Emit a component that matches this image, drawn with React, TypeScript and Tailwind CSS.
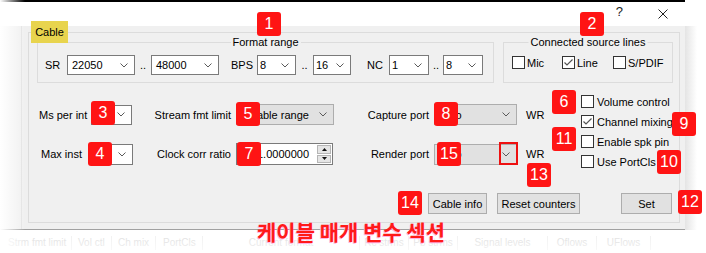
import React from 'react';

function Chevron() {
  return (
    <svg width="8" height="5" viewBox="0 0 8 5" className="shrink-0">
      <path d="M0.5 0.5 L4 4 L7.5 0.5" fill="none" stroke="#5a5a5a" strokeWidth="1" />
    </svg>
  );
}

function Combo({ value, className, textClass = 'pl-[4px]' }: { value: string; className: string; textClass?: string }) {
  return (
    <div className={`flex items-center border ${className}`}>
      <span className={`flex-1 truncate ${textClass}`}>{value}</span>
      <span className="mr-[6px]">
        <Chevron />
      </span>
    </div>
  );
}

function Check({ checked = false }: { checked?: boolean }) {
  return (
    <span className="w-[13px] h-[13px] shrink-0 border border-[#333333] bg-white flex items-center justify-center">
      {checked && (
        <svg width="11" height="11" viewBox="0 0 11 11">
          <path d="M1.5 5.5 L4 8 L9.5 2.5" fill="none" stroke="#555555" strokeWidth="1.2" />
        </svg>
      )}
    </span>
  );
}

function Badge({ n, className }: { n: string; className: string }) {
  return (
    <div
      className={`absolute w-[24px] h-[24px] rounded-[3px] bg-[#ff1414] text-white text-[16px] leading-none flex items-center justify-center font-['Liberation_Sans',Arial,sans-serif] ${className}`}
    >
      {n}
    </div>
  );
}

function Btn({ label, className }: { label: string; className: string }) {
  return (
    <div className={`h-[21px] bg-[#e1e1e1] border border-[#adadad] flex items-center justify-center ${className}`}>
      {label}
    </div>
  );
}

export default function App() {
  return (
    <div className="relative w-[706px] h-[253px] overflow-hidden bg-white text-[11px] leading-[14px] text-black font-['Liberation_Sans',Arial,sans-serif]">
      <div className="w-[685px] flex flex-col">
        <div className="h-[2px] bg-black" />
        {/* title bar */}
        <div className="h-[24px] bg-white flex items-center justify-end pr-[17px]">
          <span className="text-[13px] text-[#222222] mr-[35px] -mt-[4px]">?</span>
          <svg width="10" height="10" viewBox="0 0 10 10">
            <path d="M0.5 0.5 L9.5 9.5 M9.5 0.5 L0.5 9.5" stroke="#222222" strokeWidth="1" />
          </svg>
        </div>

        {/* body */}
        <div className="relative h-[203px] bg-[#f0f0f0] pl-[28px] pt-[6px]">
          <div className="absolute left-[21px] top-0 bottom-0 w-px bg-[#e2e2e2]" />
          <div className="w-[652px] h-[191px] border border-[#dcdcdc] flex flex-col">
            {/* format range + source lines */}
            <div className="flex mt-[9px] ml-[8px] gap-[9px]">
              <div className="relative w-[457px] h-[41px] border border-[#dcdcdc] pt-[12px] pl-[7px]">
                <span className="absolute -top-[8px] left-1/2 -translate-x-1/2 bg-[#f0f0f0] px-[2px] whitespace-nowrap">
                  Format range
                </span>
                <div className="flex items-center h-[20px]">
                  <span className="w-[22px]">SR</span>
                  <Combo value="22050" className="w-[68px] h-[20px] bg-white border-[#7a7a7a]" />
                  <span className="w-[16px] text-center">..</span>
                  <Combo value="48000" className="w-[68px] h-[20px] bg-white border-[#7a7a7a]" />
                  <span className="w-[38px] pl-[12px]">BPS</span>
                  <Combo value="8" textClass="pl-[2px]" className="w-[39px] h-[20px] bg-white border-[#7a7a7a]" />
                  <span className="w-[17px] text-center">..</span>
                  <Combo value="16" textClass="pl-[2px]" className="w-[38px] h-[20px] bg-white border-[#7a7a7a]" />
                  <span className="w-[38px] pl-[16px]">NC</span>
                  <Combo value="1" textClass="pl-[2px]" className="w-[40px] h-[20px] bg-white border-[#7a7a7a]" />
                  <span className="w-[14px] text-center">..</span>
                  <Combo value="8" textClass="pl-[2px]" className="w-[40px] h-[20px] bg-white border-[#7a7a7a]" />
                </div>
              </div>
              <div className="relative w-[170px] h-[41px] border border-[#dcdcdc] pt-[13px] pl-[8px]">
                <span className="absolute -top-[8px] left-1/2 -translate-x-1/2 bg-[#f0f0f0] px-[2px] whitespace-nowrap">
                  Connected source lines
                </span>
                <div className="flex items-center h-[13px]">
                  <div className="w-[50px] flex items-center gap-[2px]">
                    <Check />
                    <span>Mic</span>
                  </div>
                  <div className="w-[51px] flex items-center gap-[2px]">
                    <Check checked />
                    <span>Line</span>
                  </div>
                  <div className="flex items-center gap-[2px]">
                    <Check />
                    <span>S/PDIF</span>
                  </div>
                </div>
              </div>
            </div>

            {/* controls */}
            <div className="flex mt-[12px]">
              <div className="w-[552px] flex flex-col pt-[9px]">
                <div className="flex items-center h-[21px]">
                  <span className="w-[62px] pl-[10px]">Ms per int</span>
                  <Combo value="" className="w-[41px] h-[20px] bg-white border-[#7a7a7a]" />
                  <span className="w-[104px] text-right pr-[5px]">Stream fmt limit</span>
                  <Combo value="Disable range" className="w-[98px] h-[21px] bg-[#e1e1e1] border-[#adadad]" />
                  <span className="w-[100px] text-right pr-[5px]">Capture port</span>
                  <Combo value="Auto" className="w-[83px] h-[21px] bg-[#e1e1e1] border-[#adadad]" />
                  <span className="ml-[9px]">WR</span>
                </div>
                <div className="flex items-center h-[22px] mt-[18px]">
                  <span className="w-[62px] pl-[12px]">Max inst</span>
                  <Combo value="" className="w-[42px] h-[21px] bg-white border-[#7a7a7a]" />
                  <span className="w-[103px] text-right pr-[5px]">Clock corr ratio</span>
                  <div className="w-[97px] h-[22px] border border-[#7a7a7a] bg-white flex items-center">
                    <span className="flex-1 text-right pr-[7px]">1.0000000</span>
                    <div className="w-[16px] h-full flex flex-col p-px gap-px">
                      <div className="flex-1 bg-[#e5e5e5] border border-[#b5b5b5] flex items-center justify-center">
                        <svg width="5" height="3" viewBox="0 0 5 3"><path d="M2.5 0 L5 3 L0 3 Z" fill="#111" /></svg>
                      </div>
                      <div className="flex-1 bg-[#e5e5e5] border border-[#b5b5b5] flex items-center justify-center">
                        <svg width="5" height="3" viewBox="0 0 5 3"><path d="M0 0 L5 0 L2.5 3 Z" fill="#111" /></svg>
                      </div>
                    </div>
                  </div>
                  <span className="w-[101px] text-right pr-[5px]">Render port</span>
                  <Combo value="Auto" className="w-[83px] h-[21px] bg-[#e1e1e1] border-[#adadad]" />
                  <span className="ml-[9px]">WR</span>
                </div>
              </div>
              <div className="flex flex-col gap-[7px]">
                <div className="flex items-center gap-[3px] h-[13px]">
                  <Check />
                  <span>Volume control</span>
                </div>
                <div className="flex items-center gap-[3px] h-[13px]">
                  <Check checked />
                  <span>Channel mixing</span>
                </div>
                <div className="flex items-center gap-[3px] h-[13px]">
                  <Check />
                  <span>Enable spk pin</span>
                </div>
                <div className="flex items-center gap-[3px] h-[13px]">
                  <Check />
                  <span>Use PortCls</span>
                </div>
              </div>
            </div>

            {/* buttons */}
            <div className="flex justify-end pr-[7px] mt-[25px]">
              <Btn label="Cable info" className="w-[59px]" />
              <Btn label="Reset counters" className="w-[83px] ml-[10px]" />
              <Btn label="Set" className="w-[51px] ml-[41px]" />
            </div>
          </div>
        </div>

        <div className="h-px bg-[#a0a0a0]" />
        {/* faded list header behind */}
        <div className="h-[23px] flex items-end pb-[3px] text-[10px] text-[#dadada]">
          <span className="w-[72px] pl-[8px] border-r border-[#eeeeee] whitespace-nowrap overflow-hidden">Strm fmt limit</span>
          <span className="w-[40px] pl-[6px] border-r border-[#eeeeee] whitespace-nowrap overflow-hidden">Vol ctl</span>
          <span className="w-[44px] pl-[6px] border-r border-[#eeeeee] whitespace-nowrap overflow-hidden">Ch mix</span>
          <span className="w-[47px] pl-[7px] border-r border-[#eeeeee] whitespace-nowrap overflow-hidden">PortCls</span>
          <span className="w-[157px] text-center border-r border-[#eeeeee] whitespace-nowrap">Current format</span>
          <span className="w-[49px] text-center border-r border-[#eeeeee] whitespace-nowrap overflow-hidden">Rc strms</span>
          <span className="w-[49px] text-center border-r border-[#eeeeee] whitespace-nowrap overflow-hidden">Pb strms</span>
          <span className="w-[90px] text-center border-r border-[#eeeeee] whitespace-nowrap">Signal levels</span>
          <span className="w-[49px] text-center border-r border-[#eeeeee] whitespace-nowrap">Oflows</span>
          <span className="w-[54px] text-center border-r border-[#eeeeee] whitespace-nowrap">UFlows</span>
        </div>
      </div>

      {/* fades */}
      <div className="absolute left-0 top-0 w-[25px] h-full bg-linear-to-r from-white to-transparent" />
      <div className="absolute left-0 top-[229px] w-[706px] h-[24px] bg-linear-to-b from-transparent to-white/70" />
      <div className="absolute left-[685px] top-[26px] w-[12px] h-[204px] bg-linear-to-r from-[#e4e4e4] to-transparent" />

      {/* highlighted tab label */}
      <div className="absolute left-[31px] top-[21px] w-[37px] h-[22px] bg-[#e8d44e] flex items-center justify-center">
        Cable
      </div>

      {/* highlighted dropdown button */}
      <div className="absolute left-[499px] top-[142px] w-[19px] h-[23px] border-2 border-[#ee1111]" />

      <Badge n="1" className="left-[257px] top-[12px]" />
      <Badge n="2" className="left-[580px] top-[12px]" />
      <Badge n="3" className="left-[91px] top-[101px]" />
      <Badge n="4" className="left-[88px] top-[142px]" />
      <Badge n="5" className="left-[236px] top-[102px]" />
      <Badge n="6" className="left-[552px] top-[90px]" />
      <Badge n="7" className="left-[237px] top-[142px]" />
      <Badge n="8" className="left-[434px] top-[102px]" />
      <Badge n="9" className="left-[672px] top-[112px]" />
      <Badge n="10" className="left-[657px] top-[150px]" />
      <Badge n="11" className="left-[552px] top-[127px]" />
      <Badge n="12" className="left-[678px] top-[190px]" />
      <Badge n="13" className="left-[527px] top-[163px]" />
      <Badge n="14" className="left-[398px] top-[191px]" />
      <Badge n="15" className="left-[437px] top-[142px]" />

      <div className="absolute left-[257px] top-[221px] text-[21px] leading-none font-bold text-[#ff1a1a] whitespace-nowrap [text-shadow:-1px_1px_0_#ffb3e6] font-['Noto_Sans_CJK_KR','Liberation_Sans',sans-serif]">
        케이블 매개 변수 섹션
      </div>
    </div>
  );
}
